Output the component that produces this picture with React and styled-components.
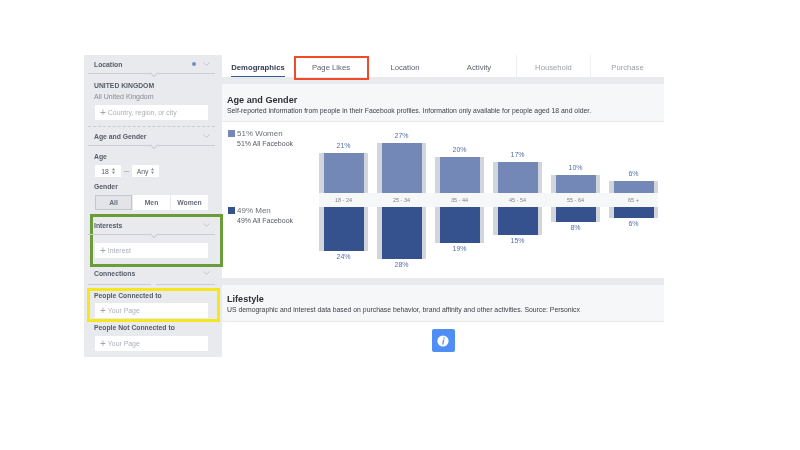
import React from 'react';
import styled, { createGlobalStyle } from 'styled-components';

const GlobalStyle = createGlobalStyle`
  html, body { margin: 0; padding: 0; background: #fff; }
  body { font-family: "Liberation Sans", Arial, sans-serif; }
`;

const Page = styled.div`
  width: 800px;
  height: 450px;
  box-sizing: border-box;
  padding: 55px 0 0 84px;
  display: flex;
  align-items: flex-start;
  overflow: hidden;
  filter: blur(0.5px);
`;

const Sidebar = styled.aside`
  width: 138px;
  height: 302px;
  flex: none;
  background: #e9eaed;
  display: flex;
  flex-direction: column;
  color: #555b68;
`;

const SectionHead = styled.div`
  position: relative;
  height: ${(p) => p.$height || 18}px;
  margin: ${(p) => p.$top || 0}px 7px 0 4px;
  padding: 0 5px 0 6px;
  display: flex;
  align-items: center;
  gap: 6px;
  border-bottom: 1px solid #c9ccd2;
  font-size: 6.8px;
  font-weight: bold;
  &::after {
    content: '';
    position: absolute;
    left: 63px;
    bottom: ${(p) => (p.$open ? '-1px' : '-3px')};
    width: 5px;
    height: ${(p) => (p.$open ? '1px' : '5px')};
    background: #e9eaed;
    ${(p) => !p.$open && 'transform: rotate(45deg); border-right: 1px solid #c9ccd2; border-bottom: 1px solid #c9ccd2;'}
  }
`;

const HeadTitle = styled.span`
  flex: 1;
`;

const Dot = styled.span`
  width: 4px;
  height: 4px;
  border-radius: 50%;
  background: #6f8dc4;
  margin-right: 1px;
`;

const Body = styled.div`
  position: relative;
  padding: 0 14px 0 11px;
  display: flex;
  flex-direction: column;
`;

const BoldCaps = styled.div`
  margin: 7px 0 0 -1px;
  font-size: 6.8px;
  line-height: 10px;
  font-weight: bold;
`;

const Region = styled.div`
  margin: 1px 0 0 -1px;
  font-size: 7px;
  line-height: 10px;
  color: #858a94;
`;

const FieldLabel = styled.div`
  margin-top: ${(p) => p.$top}px;
  margin-left: -1px;
  font-size: 6.8px;
  line-height: 10px;
  font-weight: bold;
`;

const Input = styled.div`
  height: 15px;
  margin-top: ${(p) => p.$top}px;
  padding-left: 5px;
  background: #fff;
  display: flex;
  align-items: center;
  gap: 2px;
  font-size: 6.9px;
  color: #aab0ba;
`;

const Plus = styled.span`
  font-size: 10px;
  color: #9ea3ac;
`;

const DashedRule = styled.div`
  margin: 6px 7px 0 4px;
  border-top: 1px dashed #c9ccd2;
`;

const SelectRow = styled.div`
  margin-top: 3px;
  display: flex;
  align-items: center;
  gap: 3px;
  font-size: 6.8px;
  color: #555b68;
`;

const Select = styled.div`
  width: ${(p) => p.$width}px;
  height: 12px;
  background: #fff;
  display: flex;
  align-items: center;
  justify-content: center;
  gap: 3px;
`;

const Dash = styled.span`
  width: 5px;
  border-top: 1px solid #b5b9c0;
`;

const Segments = styled.div`
  margin-top: 3px;
  height: 15px;
  display: grid;
  grid-template-columns: repeat(3, 1fr);
  gap: 1px;
`;

const Segment = styled.div`
  display: flex;
  align-items: center;
  justify-content: center;
  box-sizing: border-box;
  padding-bottom: 1px;
  font-size: 6.8px;
  font-weight: bold;
  color: #666c78;
  background: ${(p) => (p.$active ? '#e2e4e8' : '#fff')};
  border: ${(p) => (p.$active ? '1px solid #c3c6cc' : 'none')};
`;

const Marked = styled.div`
  position: relative;
  display: flex;
  flex-direction: column;
`;

const Highlight = styled.div`
  position: absolute;
  top: ${(p) => p.$top}px;
  right: ${(p) => p.$right}px;
  bottom: ${(p) => p.$bottom}px;
  left: ${(p) => p.$left}px;
  border: 3px solid ${(p) => p.$color};
  pointer-events: none;
`;

const Main = styled.main`
  width: 442px;
  height: 302px;
  flex: none;
  background: #e9eaed;
  display: flex;
  flex-direction: column;
`;

const Tabs = styled.nav`
  height: 22px;
  flex: none;
  background: #fff;
  display: grid;
  grid-template-columns: 72px repeat(5, 74px);
`;

const Tab = styled.div`
  position: relative;
  display: flex;
  align-items: center;
  justify-content: center;
  padding-top: 2px;
  font-size: 7.7px;
  font-weight: ${(p) => (p.$active ? 'bold' : 'normal')};
  color: ${(p) => (p.$active ? '#333d52' : p.$muted ? '#9b9fa7' : '#5d626c')};
  border-left: ${(p) => (p.$split ? '1px solid #eceef1' : 'none')};
  ${(p) => p.$active && `
    &::after {
      content: '';
      position: absolute;
      left: 9px;
      right: 9px;
      bottom: 0;
      height: 1px;
      background: #3b5998;
    }
  `}
  ${(p) => p.$boxed && `
    &::before {
      content: '';
      position: absolute;
      top: 1px;
      right: -1px;
      bottom: -3px;
      left: 0;
      border: 2px solid #ef4a29;
    }
  `}
`;

const SectionHeader = styled.header`
  height: ${(p) => p.$height}px;
  flex: none;
  box-sizing: border-box;
  margin-top: 7px;
  padding: ${(p) => p.$pad}px 0 0 5px;
  background: #f6f7f9;
  border-bottom: 1px solid #e6e8ec;
`;

const SectionTitle = styled.h2`
  margin: 0;
  font-size: 9.1px;
  line-height: 10px;
  font-weight: bold;
  color: #2d3035;
`;

const SectionText = styled.p`
  margin: 1px 0 0;
  font-size: 6.85px;
  line-height: 10px;
  color: #3d4046;
`;

const ChartArea = styled.section`
  height: 156px;
  flex: none;
  background: #fff;
  display: flex;
`;

const Legend = styled.div`
  width: 97px;
  flex: none;
  box-sizing: border-box;
  padding: 7px 0 0 6px;
  display: flex;
  flex-direction: column;
  gap: 57px;
`;

const LegendItem = styled.div`
  display: flex;
  flex-direction: column;
`;

const LegendTop = styled.div`
  display: flex;
  align-items: center;
  gap: 2px;
  height: 8px;
  font-size: 8px;
  color: #6b7079;
`;

const Swatch = styled.span`
  width: 7px;
  height: 7px;
  background: ${(p) => p.$color};
`;

const LegendNote = styled.div`
  margin: 2px 0 0 9px;
  font-size: 7px;
  line-height: 10px;
  color: #555a63;
`;

const Plot = styled.div`
  width: 339px;
  flex: none;
  display: flex;
  flex-direction: column;
`;

const BarRow = styled.div`
  height: ${(p) => p.$height}px;
  display: grid;
  grid-template-columns: repeat(6, 1fr);
  column-gap: 9px;
  align-items: ${(p) => (p.$up ? 'end' : 'start')};
`;

const BarCol = styled.div`
  display: flex;
  flex-direction: column;
  align-items: stretch;
`;

const Percent = styled.div`
  height: 10px;
  margin: ${(p) => (p.$up ? '0 0 2px' : '1px 0 0')};
  text-align: center;
  font-size: 7px;
  line-height: 10px;
  color: #5570a8;
`;

const BarTrack = styled.div`
  padding: 0 4px 0 5px;
  background: #d3d5dc;
`;

const BarFill = styled.div`
  height: ${(p) => p.$height}px;
  background: ${(p) => p.$color};
`;

const AgeStrip = styled.div`
  height: 14px;
  flex: none;
  background: #f6f7f9;
  display: grid;
  grid-template-columns: repeat(6, 1fr);
  column-gap: 9px;
`;

const AgeLabel = styled.div`
  text-align: center;
  font-size: 5.5px;
  line-height: 14px;
  color: #7d8188;
`;

const Footer = styled.div`
  flex: 1;
  background: #fff;
  display: flex;
  justify-content: center;
  padding: 7px 0 0;
`;

const InfoButton = styled.button`
  width: 23px;
  height: 23px;
  padding: 0;
  border: 0;
  border-radius: 2px;
  background: #4f8ef5;
  display: flex;
  align-items: center;
  justify-content: center;
`;

const Chevron = () => (
  <svg width="7" height="4" viewBox="0 0 7 4" fill="none" stroke="#b0b4bb" strokeWidth="0.7">
    <path d="M0.4 0.4 L3.5 3.4 L6.6 0.4" />
  </svg>
);

const Updown = () => (
  <svg width="3" height="6" viewBox="0 0 3 6" fill="#7d828c">
    <path d="M1.5 0 L3 2.2 H0 Z M1.5 6 L0 3.8 H3 Z" />
  </svg>
);

const InfoIcon = () => (
  <svg width="12" height="12" viewBox="0 0 12 12">
    <circle cx="6" cy="6" r="5.6" fill="#fff" />
    <path d="M6.6 2.4 H7.9 L7.6 3.7 H6.3 Z M6.1 4.6 H7.4 L6.4 9.6 H5.1 Z" fill="#4f8ef5" />
  </svg>
);

const tabs = [
  { label: 'Demographics', active: true },
  { label: 'Page Likes', boxed: true },
  { label: 'Location' },
  { label: 'Activity' },
  { label: 'Household', muted: true, split: true },
  { label: 'Purchase', muted: true, split: true },
];

const bars = [
  { age: '18 - 24', up: 21, upH: 40, down: 24, downH: 44 },
  { age: '25 - 34', up: 27, upH: 50, down: 28, downH: 52 },
  { age: '35 - 44', up: 20, upH: 36, down: 19, downH: 36 },
  { age: '45 - 54', up: 17, upH: 31, down: 15, downH: 28 },
  { age: '55 - 64', up: 10, upH: 18, down: 8, downH: 15 },
  { age: '65 +', up: 6, upH: 12, down: 6, downH: 11 },
];

export default function App() {
  return (
    <>
      <GlobalStyle />
      <Page>
        <Sidebar>
          <SectionHead>
            <HeadTitle>Location</HeadTitle>
            <Dot />
            <Chevron />
          </SectionHead>
          <Body>
            <BoldCaps>UNITED KINGDOM</BoldCaps>
            <Region>All United Kingdom</Region>
            <Input $top={3}><Plus>+</Plus>Country, region, or city</Input>
          </Body>
          <DashedRule />
          <SectionHead>
            <HeadTitle>Age and Gender</HeadTitle>
            <Chevron />
          </SectionHead>
          <Body>
            <FieldLabel $top={6}>Age</FieldLabel>
            <SelectRow>
              <Select $width={26}>18 <Updown /></Select>
              <Dash />
              <Select $width={27}>Any <Updown /></Select>
            </SelectRow>
            <FieldLabel $top={5}>Gender</FieldLabel>
            <Segments>
              <Segment $active>All</Segment>
              <Segment>Men</Segment>
              <Segment>Women</Segment>
            </Segments>
          </Body>
          <Marked>
            <Highlight $top={4} $right={-1} $bottom={-9} $left={6} $color="#6a9c3a" />
            <SectionHead $top={6}>
              <HeadTitle>Interests</HeadTitle>
              <Chevron />
            </SectionHead>
            <Body>
              <Input $top={8}><Plus>+</Plus>Interest</Input>
            </Body>
          </Marked>
          <SectionHead $top={4} $height={22} $open>
            <HeadTitle>Connections</HeadTitle>
            <Chevron />
          </SectionHead>
          <Body>
            <Marked>
              <Highlight $top={3} $right={-12} $bottom={-4} $left={-8} $color="#f6e71d" />
              <FieldLabel $top={6}>People Connected to</FieldLabel>
              <Input $top={2}><Plus>+</Plus>Your Page</Input>
            </Marked>
            <FieldLabel $top={5}>People Not Connected to</FieldLabel>
            <Input $top={3}><Plus>+</Plus>Your Page</Input>
          </Body>
        </Sidebar>
        <Main>
          <Tabs>
            {tabs.map((t) => (
              <Tab key={t.label} $active={t.active} $boxed={t.boxed} $muted={t.muted} $split={t.split}>
                {t.label}
              </Tab>
            ))}
          </Tabs>
          <SectionHeader $height={38} $pad={11}>
            <SectionTitle>Age and Gender</SectionTitle>
            <SectionText>
              Self-reported information from people in their Facebook profiles. Information only available for people aged 18 and older.
            </SectionText>
          </SectionHeader>
          <ChartArea>
            <Legend>
              <LegendItem>
                <LegendTop><Swatch $color="#7488b8" />51% Women</LegendTop>
                <LegendNote>51% All Facebook</LegendNote>
              </LegendItem>
              <LegendItem>
                <LegendTop><Swatch $color="#35528f" />49% Men</LegendTop>
                <LegendNote>49% All Facebook</LegendNote>
              </LegendItem>
            </Legend>
            <Plot>
              <BarRow $height={71} $up>
                {bars.map((b) => (
                  <BarCol key={b.age}>
                    <Percent $up>{b.up}%</Percent>
                    <BarTrack><BarFill $height={b.upH} $color="#7488b8" /></BarTrack>
                  </BarCol>
                ))}
              </BarRow>
              <AgeStrip>
                {bars.map((b) => <AgeLabel key={b.age}>{b.age}</AgeLabel>)}
              </AgeStrip>
              <BarRow $height={71}>
                {bars.map((b) => (
                  <BarCol key={b.age}>
                    <BarTrack><BarFill $height={b.downH} $color="#35528f" /></BarTrack>
                    <Percent>{b.down}%</Percent>
                  </BarCol>
                ))}
              </BarRow>
            </Plot>
          </ChartArea>
          <SectionHeader $height={37} $pad={9}>
            <SectionTitle>Lifestyle</SectionTitle>
            <SectionText>
              US demographic and interest data based on purchase behavior, brand affinity and other activities. Source: Personicx
            </SectionText>
          </SectionHeader>
          <Footer>
            <InfoButton aria-label="Info"><InfoIcon /></InfoButton>
          </Footer>
        </Main>
      </Page>
    </>
  );
}
